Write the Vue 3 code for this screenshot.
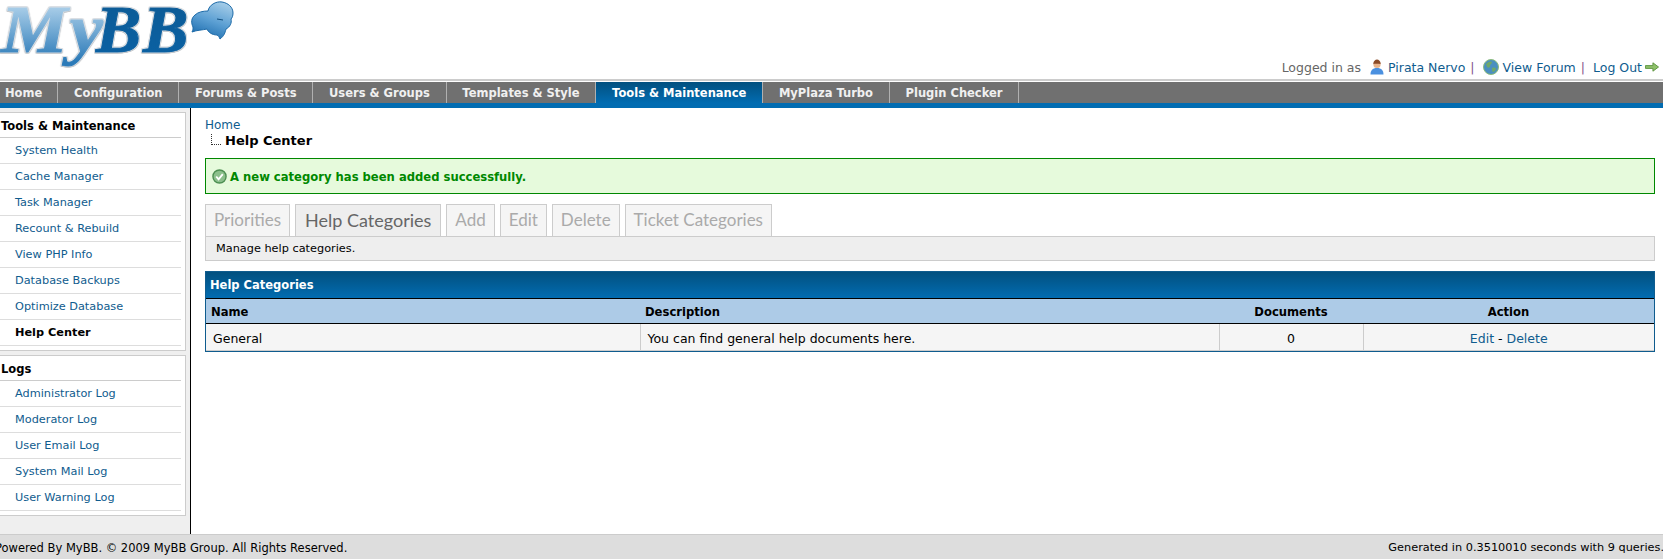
<template>
  <div class="page">
    <header class="top">
      <div class="logo">
        <span class="logo-my">My</span><span class="logo-bb">BB</span>
        <svg class="bubble" viewBox="0 0 44 42" width="44" height="42">
          <defs>
            <linearGradient id="bub" x1="0.8" y1="0" x2="0.4" y2="1">
              <stop offset="0" stop-color="#a9cfe9" />
              <stop offset="0.55" stop-color="#5b9fd3" />
              <stop offset="1" stop-color="#1f6fb0" />
            </linearGradient>
          </defs>
          <path d="M1 32c1-2 1-3 1-5-2-4-2-9 2-12 3-3 8-4 13-4 1-6 8-10 14-9 6 1 11 5 11 11 0 3-1 5-2 6 1 4-1 8-5 10-1 4-2 7-6 10-1-2-1-3-3-4-5 0-9-3-10-6-4 1-10 1-15 3z" fill="url(#bub)" stroke="#1c6aa8" stroke-width="1" />
          <path d="M26 19l6 1" stroke="#124f80" stroke-width="1" />
        </svg>
      </div>
      <div class="user-line">
        Logged in as
        <svg class="ico user-ico" viewBox="0 0 16 16" width="16" height="16">
          <path d="M1.500 15.500c0-4 2-6.500 6.500-6.500s6.500 2.500 6.500 6.500z" fill="#4a90e0" />
          <circle cx="8" cy="5.500" r="3.600" fill="#e8b48c" />
          <path d="M4.300 5c0-3 2-4.500 3.700-4.500s3.700 1.500 3.700 4.500c-2 0-5-.5-7.400 0z" fill="#8a4a26" />
        </svg>
        <a>Pirata Nervo</a>
        <span class="pipe">|</span>
        <svg class="ico globe-ico" viewBox="0 0 16 16" width="16" height="16">
          <circle cx="8" cy="8" r="7.500" fill="#4b8fc0" stroke="#8cbc7c" />
          <path d="M3 5c2-2 4-3 6-2 0 2-2 2-2 4s-2 2-3 1zM9 9c2-1 4 0 4 1s-2 3-3 3-1-3-1-4z" fill="#6fa86a" />
        </svg>
        <a>View Forum</a>
        <span class="pipe">|</span>
        <a class="logout">Log Out</a>
        <svg class="ico" viewBox="0 0 15 10" width="14" height="10">
          <path d="M.5 3.500h8v-3l6 4.500-6 4.500v-3h-8z" fill="#8fc06a" stroke="#5c9440" />
        </svg>
      </div>
    </header>

    <nav class="menu">
      <a v-for="m in menu" :key="m" class="menu-item" :class="{ active: m === 'Tools & Maintenance' }">{{ m }}</a>
    </nav>

    <div class="body">
      <aside class="side">
        <section v-for="b in sideBoxes" :key="b.title" class="side-box">
          <h3>{{ b.title }}</h3>
          <a v-for="l in b.links" :key="l" class="side-link" :class="{ current: l === 'Help Center' }">{{ l }}</a>
        </section>
      </aside>

      <main class="main">
        <div class="crumb">
          <a>Home</a>
          <div class="crumb-current"><span class="tree"></span>Help Center</div>
        </div>

        <div class="success">
          <svg viewBox="0 0 16 16" width="15" height="15">
            <circle cx="8" cy="8" r="7" fill="#8cc08c" stroke="#4d8f52" stroke-width="1.500" />
            <path d="M4.500 8l2.500 3 4.500-5.500" fill="none" stroke="#fff" stroke-width="2" />
          </svg>
          A new category has been added successfully.
        </div>

        <div class="tabs">
          <a v-for="t in tabs" :key="t" class="tab" :class="{ on: t === 'Help Categories' }">{{ t }}</a>
        </div>
        <div class="tab-desc">Manage help categories.</div>

        <div class="border-box">
          <div class="box-title">Help Categories</div>
          <table>
            <colgroup>
              <col class="c1" /><col /><col class="c3" /><col class="c4" />
            </colgroup>
            <thead>
              <tr>
                <th>Name</th>
                <th>Description</th>
                <th class="mid">Documents</th>
                <th class="mid">Action</th>
              </tr>
            </thead>
            <tbody>
              <tr>
                <td>General</td>
                <td>You can find general help documents here.</td>
                <td class="mid">0</td>
                <td class="mid"><a>Edit</a> - <a>Delete</a></td>
              </tr>
            </tbody>
          </table>
        </div>
      </main>
    </div>

    <footer class="foot">
      <span class="foot-left">Powered By MyBB. © 2009 MyBB Group. All Rights Reserved.</span>
      <span class="foot-right">Generated in 0.3510010 seconds with 9 queries.</span>
    </footer>
  </div>
</template>

<script setup>
const menu = [
  "Home",
  "Configuration",
  "Forums & Posts",
  "Users & Groups",
  "Templates & Style",
  "Tools & Maintenance",
  "MyPlaza Turbo",
  "Plugin Checker",
];

const sideBoxes = [
  {
    title: "Tools & Maintenance",
    links: [
      "System Health",
      "Cache Manager",
      "Task Manager",
      "Recount & Rebuild",
      "View PHP Info",
      "Database Backups",
      "Optimize Database",
      "Help Center",
    ],
  },
  {
    title: "Logs",
    links: [
      "Administrator Log",
      "Moderator Log",
      "User Email Log",
      "System Mail Log",
      "User Warning Log",
    ],
  },
];

const tabs = ["Priorities", "Help Categories", "Add", "Edit", "Delete", "Ticket Categories"];
</script>

<style>
html, body {
  margin: 0;
  overflow: hidden;
  background: #fff;
}
</style>

<style scoped>
.page {
  width: 1663px;
  height: 559px;
  display: flex;
  flex-direction: column;
  font-family: "DejaVu Sans", Verdana, sans-serif;
  font-size: 11.3px;
  color: #000;
  overflow: hidden;
}

.top {
  height: 79px;
  flex: none;
  display: flex;
  justify-content: space-between;
  align-items: flex-end;
  border-bottom: 2px solid #ccc;
}
.logo {
  display: flex;
  align-items: flex-start;
  height: 79px;
  font-family: "Liberation Serif", serif;
  font-style: italic;
  font-weight: bold;
  font-size: 68px;
  line-height: 58px;
  letter-spacing: 2px;
}
.logo-my,
.logo-bb {
  background-clip: text;
  -webkit-background-clip: text;
  color: transparent;
  -webkit-text-stroke: 1px transparent;
  padding: 0 6px 14px 1px;
  filter: drop-shadow(1px 0 0 #d8dde2) drop-shadow(-1px 0 0 #d8dde2) drop-shadow(0 1px 0 #c4c8cc) drop-shadow(0 -1px 0 #d8dde2);
}
.logo-my {
  background-image: linear-gradient(#a8cde8 10%, #2b7ab8 85%);
  transform: scaleX(1.1);
  transform-origin: left;
}
.logo-bb {
  background-image: linear-gradient(#0c5b96, #0a62a6);
  margin-left: -7px;
}
.bubble {
  margin-left: -5px;
}

.user-line {
  display: flex;
  align-items: center;
  font-size: 12.5px;
  color: #666;
  padding: 0 4px 4px 0;
  white-space: pre;
}
.user-line a {
  color: #0f5c8e;
}
.pipe {
  color: #85528c;
  margin: 0 8px 0 5px;
}
.ico {
  flex: none;
}
.user-ico {
  margin: 0 3px 0 4px;
}
.globe-ico {
  margin: 0 4px 0 0;
}
.logout {
  margin: 0 3px 0 0;
}

.menu {
  margin-top: 1px;
  height: 21px;
  flex: none;
  display: flex;
  background: #707070;
  border-bottom: 5px solid #026cb1;
}
.menu-item {
  color: #f0f0f0;
  font-weight: bold;
  font-size: 11.5px;
  line-height: 22px;
  padding: 0 15.750px;
  border-right: 1px solid #b0b0b0;
  white-space: nowrap;
}
.menu-item:first-child {
  padding: 0 15px 0 5px;
}
.menu-item.active {
  color: #fff;
  background: linear-gradient(#02507f, #026cb1);
}

.body {
  flex: 1;
  display: flex;
  min-height: 0;
}

.side {
  width: 190px;
  flex: none;
  background: #efefef;
  border-right: 1px solid #000;
  padding-top: 4px;
}
.side-box {
  width: 186px;
  box-sizing: border-box;
  background: #fff;
  border: 1px solid #ccc;
  border-left: none;
  padding-right: 4px;
  padding-bottom: 4px;
  margin-bottom: 4px;
}
.side-box h3 {
  margin: 0;
  font-size: 11.5px;
  line-height: 22px;
  padding: 2px 0 0 1px;
  border-bottom: 1px solid #ccc;
}
.side-link {
  display: block;
  line-height: 25px;
  padding-left: 15px;
  color: #0f5c8e;
  border-bottom: 1px solid #ddd;
}
.side-link.current {
  color: #000;
  font-weight: bold;
}

.main {
  flex: 1;
  min-width: 0;
  padding: 10px 8px 0 14px;
}
.crumb {
  color: #0f5c8e;
  font-size: 12px;
  line-height: 15px;
}
.crumb-current {
  display: flex;
  align-items: flex-end;
  color: #000;
  font-weight: bold;
  font-size: 13px;
  line-height: 16px;
}
.tree {
  width: 10px;
  height: 11px;
  margin: 0 4px 4px 6px;
  border-left: 1px dotted #333;
  border-bottom: 1px dotted #333;
  box-sizing: border-box;
}
.success {
  margin-top: 9px;
  height: 36px;
  box-sizing: border-box;
  border: 1px solid #080;
  background: #e6fadc;
  color: #080;
  font-weight: bold;
  font-size: 11.6px;
  display: flex;
  align-items: center;
  gap: 3px;
  padding: 1px 0 0 6px;
}

.tabs {
  margin-top: 10px;
  display: flex;
  gap: 5px;
  align-items: flex-end;
  height: 32px;
}
.tab {
  height: 32px;
  box-sizing: border-box;
  border: 1px solid #ccc;
  border-bottom: none;
  background: #f5f5f5;
  color: #aaa;
  font-family: Lato, sans-serif;
  font-size: 17px;
  line-height: 30px;
  padding: 0 8px;
}
.tab.on {
  background: #eee;
  color: #666;
  font-size: 18px;
  padding: 0 9px;
}
.tab-desc {
  height: 25px;
  box-sizing: border-box;
  background: #eee;
  border: 1px solid #ccc;
  line-height: 23px;
  padding-left: 10px;
}

.border-box {
  margin-top: 10px;
  border: 1px solid #0f5c8e;
}
.box-title {
  height: 26px;
  background: linear-gradient(#02507f, #026cb1);
  color: #fff;
  font-weight: bold;
  font-size: 11.5px;
  line-height: 27px;
  padding-left: 4px;
}
table {
  width: 100%;
  table-layout: fixed;
  border-collapse: collapse;
}
.c1 {
  width: 434px;
}
.c3 {
  width: 144px;
}
.c4 {
  width: 291px;
}
th {
  height: 25px;
  padding: 1px 5px 0;
  box-sizing: border-box;
  text-align: left;
  background: #adcbe7;
  border-top: 1px solid #000;
  border-bottom: 1px solid #000;
  font-size: 11.6px;
}
td {
  height: 27px;
  padding: 2px 7px 0;
  box-sizing: border-box;
  background: #f5f5f5;
  border-right: 1px solid #ccc;
  border-bottom: 1px solid #ccc;
  font-size: 12.5px;
}
td:last-child {
  border-right: none;
}
th.mid,
td.mid {
  text-align: center;
}
td a {
  color: #0f5c8e;
}

.foot {
  height: 25px;
  flex: none;
  box-sizing: border-box;
  background: #ddd;
  border-top: 1px solid #ccc;
  padding-top: 1px;
  display: flex;
  justify-content: space-between;
  align-items: center;
  white-space: nowrap;
}
.foot-left {
  margin-left: -5px;
  font-size: 11.5px;
}
.foot-right {
  margin-right: -1px;
}
</style>
